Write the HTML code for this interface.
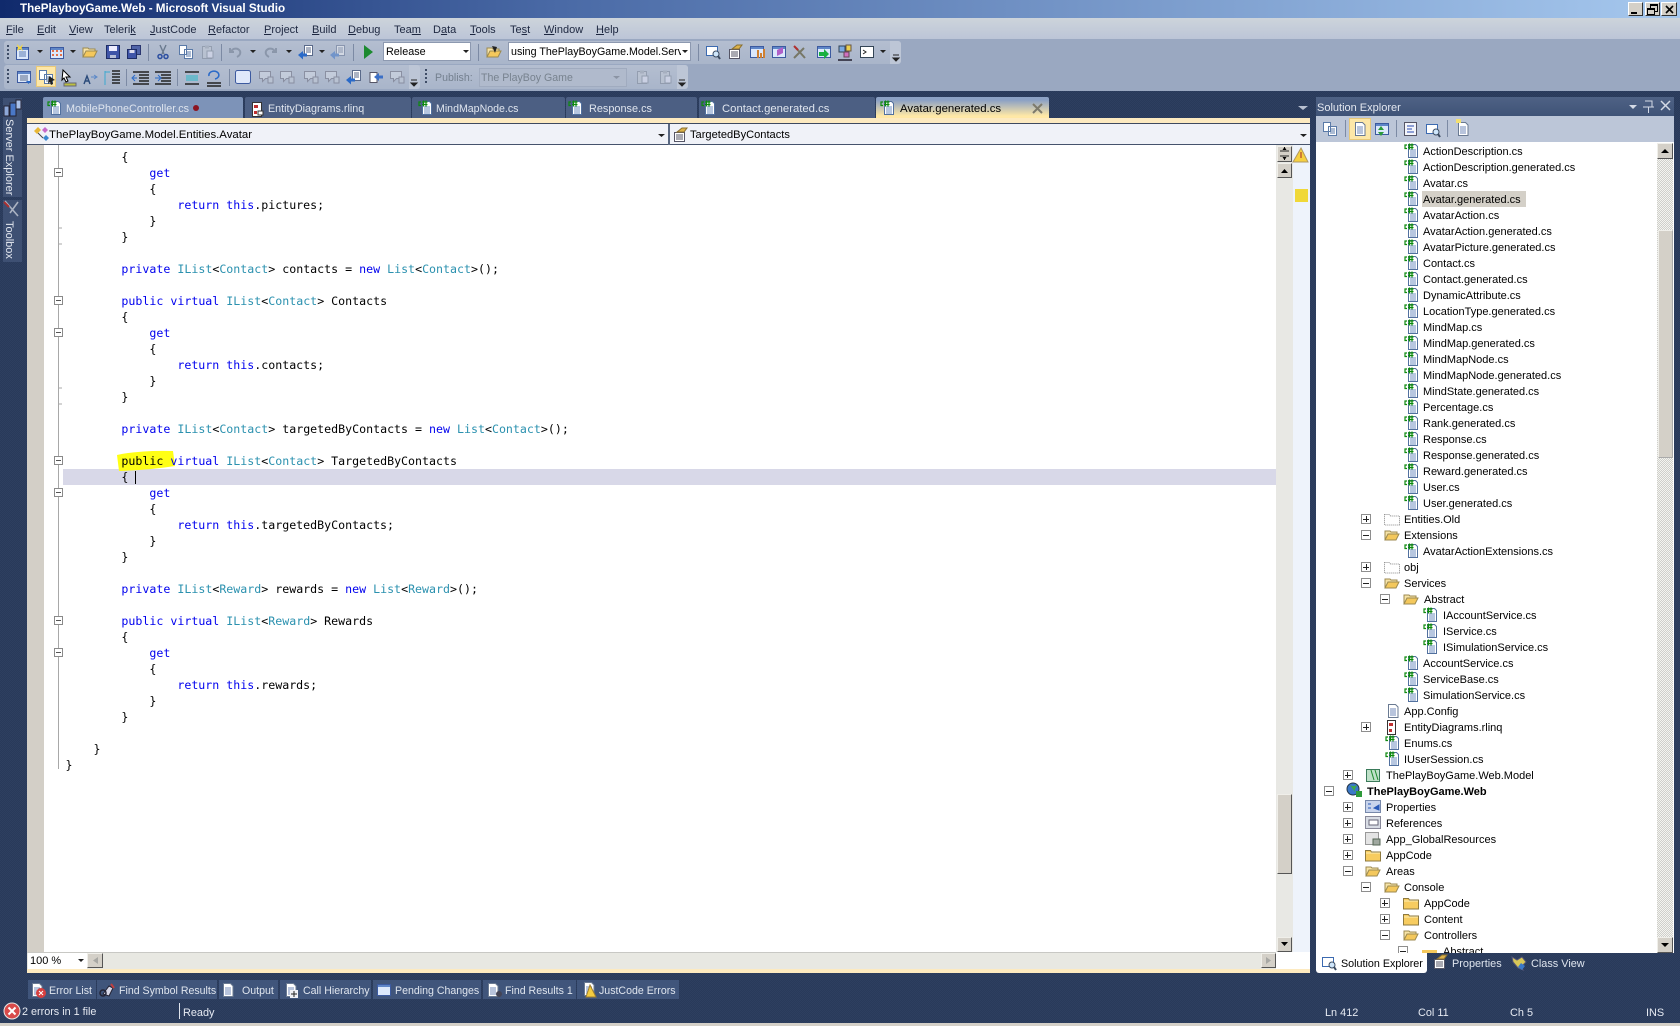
<!DOCTYPE html>
<html><head><meta charset="utf-8"><title>ThePlayboyGame.Web - Microsoft Visual Studio</title>
<style>
html,body{margin:0;padding:0;width:1680px;height:1026px;overflow:hidden;background:#2b3c5c repeating-conic-gradient(#293a5a 0 25%,#2e3f60 0 50%) 0 0/2px 2px}
body{position:relative;font:11px/16px "Liberation Sans",sans-serif;color:#000}
.a,.m span,.tab,.r b,.r span{position:absolute}
.a{white-space:nowrap}
.tab{top:97px;height:21px;background:#4c5f83;color:#dfe5ee;border-radius:2px 2px 0 0;line-height:25px;font-size:10.8px}
.tab span{position:absolute;white-space:nowrap}
.bt{position:absolute;top:980px;height:19px;background:#40557b;color:#dfe5ee;line-height:22px;white-space:nowrap;font-size:10.6px}
.bt span{position:absolute}
.m span{top:22px;color:#1d2740;font-size:11px;white-space:nowrap}
pre{position:absolute;left:65.5px;top:149px;margin:0;font:11.62px/16px "DejaVu Sans Mono",monospace;color:#000}
i{font-style:normal;color:#0000ee}em{font-style:normal;color:#2b91af}
.c{position:absolute;width:7px;height:7px;left:54px;border:1px solid #8a8a8a;background:#fff}
.c:after{content:"";position:absolute;left:1px;right:1px;top:3px;height:1px;background:#555}
.sb{position:absolute;background:#d4d0c8;border:1px solid;border-color:#f0efea #555 #555 #f0efea;box-sizing:border-box}
.tree{position:absolute;left:1316px;top:144px;width:341px;height:809px;overflow:hidden;font-size:11px}
.r{position:relative;height:16px;--l:0}
.r span{left:calc(51px + var(--l)*19px);white-space:nowrap;top:0}
.r.l4 span{left:107px}
.r b{left:calc(8px + var(--l)*18.6px);top:2px;width:8px;height:8px;border:1px solid #8e8e8e;background:#fff}
.r b:before{content:"";position:absolute;left:1px;right:1px;top:3.5px;height:1px;background:#222}
.r b.p:after{content:"";position:absolute;top:1px;bottom:1px;left:3.5px;width:1px;background:#222}
.l1{--l:1}.l2{--l:2}.l3,.l4{--l:3}
.w{position:absolute;top:2px;width:15px;height:14px;background:#d4d0c8;border:1px solid;border-color:#fff #333 #333 #fff;box-sizing:border-box}
.grip{position:absolute;width:2px;background-image:linear-gradient(#3e4c66 50%,transparent 50%);background-size:2px 4px}
.sep{position:absolute;width:1px;background:#7c8aa4}
svg.o{position:absolute;left:0;top:0;pointer-events:none}
</style></head><body>
<!-- title -->
<div class="a" style="left:0;top:0;width:1680px;height:18px;background:linear-gradient(90deg,#102a6c 0,#4a6aa6 560px,#a6c8ee 100%)"></div>
<div class="a" style="left:20px;top:0;line-height:18px;color:#fff;font-weight:bold;font-size:11.67px">ThePlayboyGame.Web - Microsoft Visual Studio</div>
<div class="w" style="left:1628px"><div class="a" style="left:2px;top:9px;width:6px;height:2px;background:#000"></div></div>
<div class="w" style="left:1645px"><div class="a" style="left:4px;top:1px;width:6px;height:5px;border:1px solid #000;border-top-width:2px"></div><div class="a" style="left:1px;top:5px;width:6px;height:4px;border:1px solid #000;border-top-width:2px;background:#d4d0c8"></div></div>
<div class="w" style="left:1661px;width:16px"><svg class="a" style="left:3px;top:2px" width="9" height="9"><path d="M1 1l7 7M8 1l-7 7" stroke="#000" stroke-width="1.6"/></svg></div>
<!-- menu + toolbars -->
<div class="a" style="left:0;top:18px;width:1680px;height:21px;background:linear-gradient(#cdd4db,#bcc5d7)"></div>
<div class="a" style="left:0;top:39px;width:1680px;height:52px;background:#9aa8c1"></div>
<div class="m" style="position:absolute;left:0;top:0">
<span style="left:6px"><u>F</u>ile</span><span style="left:37px"><u>E</u>dit</span><span style="left:69px"><u>V</u>iew</span><span style="left:104px">Teleri<u>k</u></span><span style="left:150px"><u>J</u>ustCode</span><span style="left:208px"><u>R</u>efactor</span><span style="left:264px"><u>P</u>roject</span><span style="left:312px"><u>B</u>uild</span><span style="left:348px"><u>D</u>ebug</span><span style="left:394px">Tea<u>m</u></span><span style="left:433px">D<u>a</u>ta</span><span style="left:470px"><u>T</u>ools</span><span style="left:510px">Te<u>s</u>t</span><span style="left:544px"><u>W</u>indow</span><span style="left:596px"><u>H</u>elp</span></div>
<div class="a" style="left:4px;top:41px;width:897px;height:23px;background:linear-gradient(#b4bed0,#a9b5ca);border-radius:3px"></div>
<div class="a" style="left:4px;top:65px;width:684px;height:24px;background:linear-gradient(#b4bed0,#a9b5ca);border-radius:3px"></div>
<div class="a" style="left:890px;top:41px;width:11px;height:23px;background:#bdc6d6;border-radius:0 3px 3px 0"></div>
<div class="a" style="left:677px;top:65px;width:11px;height:24px;background:#bdc6d6;border-radius:0 3px 3px 0"></div>
<div class="a" style="left:409px;top:65px;width:11px;height:24px;background:#bdc6d6;border-radius:0 3px 3px 0"></div>
<div class="grip" style="left:7px;top:45px;height:16px"></div><div class="grip" style="left:7px;top:69px;height:16px"></div><div class="grip" style="left:425px;top:69px;height:16px"></div>
<div class="sep" style="left:148px;top:44px;height:17px"></div><div class="sep" style="left:221px;top:44px;height:17px"></div><div class="sep" style="left:353px;top:44px;height:17px"></div><div class="sep" style="left:478px;top:44px;height:17px"></div><div class="sep" style="left:698px;top:44px;height:17px"></div>
<div class="sep" style="left:126px;top:69px;height:17px"></div><div class="sep" style="left:177px;top:69px;height:17px"></div><div class="sep" style="left:229px;top:69px;height:17px"></div>
<div class="a" style="left:383px;top:42px;width:88px;height:19px;background:#fff;border:1px solid #8d99b0;box-sizing:border-box;padding-left:2px;line-height:18px;font-size:10.8px">Release</div>
<div class="a" style="left:508px;top:42px;width:183px;height:19px;background:#fff;border:1px solid #8d99b0;box-sizing:border-box;padding-left:2px;line-height:19px;font-size:10.7px;overflow:hidden"><span style="display:block;width:170px;overflow:hidden">using ThePlayBoyGame.Model.Serv</span></div>
<div class="a" style="left:36px;top:66px;width:20px;height:21px;background:#fde7a8;border:1px solid #e8c878;box-sizing:border-box"></div>
<div class="a" style="left:435px;top:69px;color:#74808f;line-height:18px;font-size:10.6px">Publish:</div>
<div class="a" style="left:479px;top:68px;width:148px;height:19px;background:#b0bacc;border:1px solid #a0abbf;box-sizing:border-box;padding-left:1px;line-height:19px;color:#78838f;font-size:10.6px">The PlayBoy Game</div>
<!-- left sidebar -->
<div class="a" style="left:3px;top:98px;width:19px;height:99px;background:#3e5073"></div>
<div class="a" style="left:3px;top:200px;width:19px;height:62px;background:#3e5073"></div>
<div class="a" style="left:2px;top:119px;color:#e4e8f0;font-size:11px;line-height:14px;writing-mode:vertical-rl">Server Explorer</div>
<div class="a" style="left:2px;top:221px;color:#e4e8f0;font-size:11px;line-height:14px;writing-mode:vertical-rl">Toolbox</div>
<!-- tabs -->
<div class="tab" style="left:43px;width:200px;background:#7d93b8"><span style="left:23px">MobilePhoneController.cs</span><span style="left:150px;top:8px;width:6px;height:6px;background:#8c1420;border-radius:50%"></span></div>
<div class="tab" style="left:245px;width:166px"><span style="left:23px;font-size:10.75px">EntityDiagrams.rlinq</span></div>
<div class="tab" style="left:412px;width:153px"><span style="left:24px;font-size:10.6px">MindMapNode.cs</span></div>
<div class="tab" style="left:566px;width:131px"><span style="left:23px;font-size:10.9px">Response.cs</span></div>
<div class="tab" style="left:699px;width:176px"><span style="left:23px;font-size:11.3px">Contact.generated.cs</span></div>
<div class="tab" style="left:876px;width:173px;background:linear-gradient(#8ca1c4 15%,#ffe8a6 90%);color:#000"><span style="left:24px;font-size:11.4px">Avatar.generated.cs</span></div>
<div class="a" style="left:27px;top:118px;width:1283px;height:5px;background:#fdeac0"></div>
<div class="a" style="left:27px;top:123px;width:1283px;height:1px;background:#3e4a60"></div>
<!-- nav bar -->
<div class="a" style="left:27px;top:124px;width:1283px;height:21px;background:#f0f2f8;border-bottom:1px solid #46536c;box-sizing:border-box"></div>
<div class="a" style="left:668px;top:124px;width:2px;height:21px;background:#596780"></div>
<div class="a" style="left:49px;top:127px;font-size:11.4px">ThePlayBoyGame.Model.Entities.Avatar</div>
<div class="a" style="left:690px;top:127px;font-size:11.1px">TargetedByContacts</div>
<!-- editor -->
<div class="a" style="left:27px;top:145px;width:1249px;height:807px;background:#fff"></div>
<div class="a" style="left:27px;top:145px;width:17px;height:807px;background:#d3cfc7"></div>
<div class="a" style="left:58px;top:145px;width:1px;height:624px;background:#a8a8a8"></div>
<div class="a" style="left:63px;top:469px;width:1213px;height:16px;background:#d8d8e8"></div>
<svg class="a" style="left:0;top:0" width="200" height="500"><path d="M117 455Q140 450 173 451L175 466Q150 470 119 471Z" fill="#ffff14"/><path d="M58 228h4M58 244h4M58 388h4M58 404h4M58 548h4M58 564h4M58 708h4M58 724h4" stroke="#a8a8a8"/></svg>
<div class="c" style="top:168px"></div><div class="c" style="top:296px"></div><div class="c" style="top:328px"></div><div class="c" style="top:456px"></div><div class="c" style="top:488px"></div><div class="c" style="top:616px"></div><div class="c" style="top:648px"></div>
<pre>        {
            <i>get</i>
            {
                <i>return</i> <i>this</i>.pictures;
            }
        }

        <i>private</i> <em>IList</em>&lt;<em>Contact</em>&gt; contacts = <i>new</i> <em>List</em>&lt;<em>Contact</em>&gt;();

        <i>public</i> <i>virtual</i> <em>IList</em>&lt;<em>Contact</em>&gt; Contacts
        {
            <i>get</i>
            {
                <i>return</i> <i>this</i>.contacts;
            }
        }

        <i>private</i> <em>IList</em>&lt;<em>Contact</em>&gt; targetedByContacts = <i>new</i> <em>List</em>&lt;<em>Contact</em>&gt;();

        <span style="color:#000">public</span> <i>virtual</i> <em>IList</em>&lt;<em>Contact</em>&gt; TargetedByContacts
        {
            <i>get</i>
            {
                <i>return</i> <i>this</i>.targetedByContacts;
            }
        }

        <i>private</i> <em>IList</em>&lt;<em>Reward</em>&gt; rewards = <i>new</i> <em>List</em>&lt;<em>Reward</em>&gt;();

        <i>public</i> <i>virtual</i> <em>IList</em>&lt;<em>Reward</em>&gt; Rewards
        {
            <i>get</i>
            {
                <i>return</i> <i>this</i>.rewards;
            }
        }

    }
}</pre>
<div class="a" style="left:135px;top:471px;width:1px;height:13px;background:#000"></div>
<!-- editor scrollbars -->
<div class="a" style="left:1276px;top:145px;width:17px;height:807px;background:#e8e8e4"></div>
<div class="sb" style="left:1277px;top:146px;width:15px;height:16px"></div>
<div class="sb" style="left:1277px;top:163px;width:15px;height:15px"></div>
<div class="sb" style="left:1277px;top:794px;width:15px;height:80px"></div>
<div class="sb" style="left:1277px;top:937px;width:15px;height:15px"></div>
<div class="a" style="left:1293px;top:145px;width:17px;height:807px;background:#eef3fb"></div>
<div class="a" style="left:1295px;top:189px;width:13px;height:13px;background:#f0d838"></div>
<div class="a" style="left:27px;top:952px;width:1283px;height:17px;background:#e8e8e2;border-top:1px solid #c8c8c4;box-sizing:border-box"></div>
<div class="a" style="left:1276px;top:952px;width:34px;height:17px;background:#fff"></div>
<div class="a" style="left:27px;top:969px;width:1283px;height:4px;background:#fdeac0"></div>
<div class="a" style="left:28px;top:953px;width:59px;height:16px;background:#fff;line-height:17px;padding-left:2px;box-sizing:border-box;font-size:11px">100 %</div>
<div class="sb" style="left:87px;top:953px;width:16px;height:15px"></div>
<div class="sb" style="left:1261px;top:953px;width:15px;height:15px"></div>
<!-- solution explorer -->
<div class="a" style="left:1316px;top:97px;width:358px;height:19px;background:linear-gradient(#4f6285,#3f5377);color:#e4e8f0;line-height:22px;padding-left:1px;box-sizing:border-box;font-size:11px">Solution Explorer</div>
<div class="a" style="left:1316px;top:116px;width:358px;height:26px;background:#bcc6d8"></div>
<div class="a" style="left:1349px;top:118px;width:22px;height:22px;background:#fde7a8;border:1px solid #e8c878;box-sizing:border-box"></div>
<div class="sep" style="left:1345px;top:120px;height:17px"></div><div class="sep" style="left:1396px;top:120px;height:17px"></div><div class="sep" style="left:1447px;top:120px;height:17px"></div>
<div class="a" style="left:1316px;top:142px;width:358px;height:811px;background:#fff"></div>
<div class="a" style="left:1422px;top:191px;width:104px;height:16px;background:#d4d0c8"></div>
<div class="a" style="left:1657px;top:143px;width:16px;height:810px;background:repeating-conic-gradient(#cfcfcb 0 25%,#f4f4f0 0 50%) 0 0/2px 2px"></div>
<div class="sb" style="left:1657px;top:143px;width:16px;height:16px"></div>
<div class="sb" style="left:1658px;top:230px;width:15px;height:228px;border-color:#f0efea #aaa #aaa #f0efea"></div>
<div class="sb" style="left:1657px;top:937px;width:16px;height:16px"></div>
<div class="tree">
<div class="r l4"><span>ActionDescription.cs</span></div>
<div class="r l4"><span>ActionDescription.generated.cs</span></div>
<div class="r l4"><span>Avatar.cs</span></div>
<div class="r l4"><span>Avatar.generated.cs</span></div>
<div class="r l4"><span>AvatarAction.cs</span></div>
<div class="r l4"><span>AvatarAction.generated.cs</span></div>
<div class="r l4"><span>AvatarPicture.generated.cs</span></div>
<div class="r l4"><span>Contact.cs</span></div>
<div class="r l4"><span>Contact.generated.cs</span></div>
<div class="r l4"><span>DynamicAttribute.cs</span></div>
<div class="r l4"><span>LocationType.generated.cs</span></div>
<div class="r l4"><span>MindMap.cs</span></div>
<div class="r l4"><span>MindMap.generated.cs</span></div>
<div class="r l4"><span>MindMapNode.cs</span></div>
<div class="r l4"><span>MindMapNode.generated.cs</span></div>
<div class="r l4"><span>MindState.generated.cs</span></div>
<div class="r l4"><span>Percentage.cs</span></div>
<div class="r l4"><span>Rank.generated.cs</span></div>
<div class="r l4"><span>Response.cs</span></div>
<div class="r l4"><span>Response.generated.cs</span></div>
<div class="r l4"><span>Reward.generated.cs</span></div>
<div class="r l4"><span>User.cs</span></div>
<div class="r l4"><span>User.generated.cs</span></div>
<div class="r l2"><b class="p"></b><span style="left:88px">Entities.Old</span></div>
<div class="r l2"><b></b><span style="left:88px">Extensions</span></div>
<div class="r l4"><span>AvatarActionExtensions.cs</span></div>
<div class="r l2"><b class="p"></b><span style="left:88px">obj</span></div>
<div class="r l2"><b></b><span style="left:88px">Services</span></div>
<div class="r l3"><b></b><span>Abstract</span></div>
<div class="r"><span style="left:127px">IAccountService.cs</span></div>
<div class="r"><span style="left:127px">IService.cs</span></div>
<div class="r"><span style="left:127px">ISimulationService.cs</span></div>
<div class="r l4"><span>AccountService.cs</span></div>
<div class="r l4"><span>ServiceBase.cs</span></div>
<div class="r l4"><span>SimulationService.cs</span></div>
<div class="r"><span style="left:88px">App.Config</span></div>
<div class="r l2"><b class="p"></b><span style="left:88px">EntityDiagrams.rlinq</span></div>
<div class="r"><span style="left:88px">Enums.cs</span></div>
<div class="r"><span style="left:88px">IUserSession.cs</span></div>
<div class="r l1"><b class="p"></b><span style="left:70px">ThePlayBoyGame.Web.Model</span></div>
<div class="r"><b></b><span style="left:51px;font-weight:bold">ThePlayBoyGame.Web</span></div>
<div class="r l1"><b class="p"></b><span style="left:70px">Properties</span></div>
<div class="r l1"><b class="p"></b><span style="left:70px">References</span></div>
<div class="r l1"><b class="p"></b><span style="left:70px">App_GlobalResources</span></div>
<div class="r l1"><b class="p"></b><span style="left:70px">AppCode</span></div>
<div class="r l1"><b></b><span style="left:70px">Areas</span></div>
<div class="r l2"><b></b><span style="left:88px">Console</span></div>
<div class="r l3"><b class="p"></b><span>AppCode</span></div>
<div class="r l3"><b class="p"></b><span>Content</span></div>
<div class="r l3"><b></b><span>Controllers</span></div>
<div class="r" style="--l:4"><b></b><span style="left:127px">Abstract</span></div>
</div>
<div class="a" style="left:1316px;top:953px;width:111px;height:20px;background:#fff;border-radius:0 0 3px 3px"></div>
<div class="a" style="left:1341px;top:956px;font-size:10.75px">Solution Explorer</div>
<div class="a" style="left:1452px;top:956px;color:#dfe5ee;font-size:10.9px">Properties</div>
<div class="a" style="left:1531px;top:956px;color:#dfe5ee;font-size:10.9px">Class View</div>
<!-- bottom tabs -->
<div class="bt" style="left:28px;width:68px"><span style="left:21px">Error List</span></div>
<div class="bt" style="left:97px;width:120px"><span style="left:22px">Find Symbol Results</span></div>
<div class="bt" style="left:219px;width:59px"><span style="left:23px">Output</span></div>
<div class="bt" style="left:280px;width:91px"><span style="left:23px">Call Hierarchy</span></div>
<div class="bt" style="left:373px;width:108px"><span style="left:22px">Pending Changes</span></div>
<div class="bt" style="left:483px;width:93px"><span style="left:22px">Find Results 1</span></div>
<div class="bt" style="left:577px;width:102px"><span style="left:22px">JustCode Errors</span></div>
<!-- status -->
<div class="a" style="left:0;top:1023px;width:1680px;height:3px;background:#d4d0c8"></div>
<div class="a" style="left:22px;top:1004px;color:#e6eaf2;font-size:10.8px">2 errors in 1 file</div>
<div class="a" style="left:179px;top:1003px;width:1px;height:16px;background:#e0e4ec"></div>
<div class="a" style="left:183px;top:1005px;color:#e6eaf2;font-size:10.9px">Ready</div>
<div class="a" style="left:1325px;top:1005px;color:#e6eaf2;font-size:10.9px">Ln 412</div>
<div class="a" style="left:1418px;top:1005px;color:#e6eaf2;font-size:10.9px">Col 11</div>
<div class="a" style="left:1510px;top:1005px;color:#e6eaf2;font-size:10.9px">Ch 5</div>
<div class="a" style="left:1646px;top:1005px;color:#e6eaf2;font-size:10.9px">INS</div>
<!-- icon overlay -->
<svg class="o" width="1680" height="1026" viewBox="0 0 1680 1026" xmlns="http://www.w3.org/2000/svg">
<defs>
<g id="cs"><path d="M4.500 1.500h7l2 2v11h-9z" fill="#fff" stroke="#51709e"/><path d="M6 7h6M6 9h6M6 11h6M6 13h6" stroke="#6f8fc0"/><path d="M3 2H1v3.500h2" fill="none" stroke="#0e8a0e" stroke-width="1.200"/><path d="M5.500 .5v6M8 .5v6M4 2h5.500M4 4.500h5.500" stroke="#0e8a0e" stroke-width="1.200"/></g>
<g id="fo"><path d="M1 13V4h5l1 1h6v2" fill="#f7e4a8" stroke="#9c8a50"/><path d="M1 13l3-6h11l-3 6z" fill="#f4c85c" stroke="#9c8a50"/></g>
<g id="fc"><path d="M.5 3.500h5l1 1.500h9v9H.5z" fill="#f7cc60" stroke="#8e7a40"/><path d="M1 6h14" stroke="#fdeeb4"/></g>
<g id="fd"><path d="M.5 3.500h5l1 1.500h9v9H.5z" fill="#fff" stroke="#888" stroke-dasharray="1 1"/></g>
<g id="dc"><path d="M3.500 1.500h7l2.500 2.500v10.500H3.500z" fill="#fff" stroke="#6a7a92"/><path d="M5 6h6M5 8h6M5 10h6M5 12h6" stroke="#7088b8"/></g>
<g id="sv"><path d="M1.500 1.500h13v13h-13z" fill="#3f55a8" stroke="#1e2d66"/><path d="M4 2h8v5H4z" fill="#eef"/><path d="M5 11h6v3H5z" fill="#b8c0d8"/></g>
<g id="sq"><path d="M5.500 1.500h9v9h-9z" fill="#5064a8" stroke="#2a3670"/><path d="M1.500 5.500h9v9h-9z" fill="#3f55a8" stroke="#1e2d66"/><path d="M3.500 6h5v3h-5z" fill="#dde"/></g>
<g id="cu"><path d="M5 1l4 9M11 1l-4 9" stroke="#6a7a8e" stroke-width="1.400"/><circle cx="5" cy="12.500" r="2" fill="none" stroke="#2b4ea0" stroke-width="1.500"/><circle cx="11" cy="12.500" r="2" fill="none" stroke="#2b4ea0" stroke-width="1.500"/></g>
<g id="cp"><path d="M1.500 1.500h7v9h-7zM6.500 5.500h8v9h-8z" fill="#fff" stroke="#5a7aa8"/><path d="M8 8h5M8 10h5M8 12h5" stroke="#5a7aa8"/></g>
<g id="gr" opacity=".45"><path d="M3.500 2.500h9v12h-9z" fill="#c6ccd6" stroke="#737d8c"/><path d="M6 1.500h4v3H6z" fill="#9aa2ae"/><path d="M8 7h6v7H8z" fill="#eef" stroke="#737d8c"/></g>
<g id="un" opacity=".55" fill="none" stroke="#6e7a8e" stroke-width="2"><path d="M3 8a5 5 0 0 1 9-1c1 3-1 5-3 6M2 4v4h4"/></g>
<g id="nv"><path d="M6.500 1.500h8v10h-8z" fill="#fff" stroke="#5a6a8a"/><path d="M8 4h5M8 6h5M8 8h5" stroke="#5a6a8a"/><path d="M0 11l5-4v2.500h4v3H5v3z" fill="#2a6ac8"/></g>
<g id="bx"><path d="M1.500 2.500h13v11h-13z" fill="#dce8fb" stroke="#3c5aa0"/><path d="M2 3h12v2H2z" fill="#5f86c8"/></g>
<g id="mg"><path d="M1.500 2.500h11v9h-11z" fill="#fff" stroke="#3c6ab0"/><circle cx="11" cy="10" r="3" fill="#cfe6fb" stroke="#3a4a60"/><path d="M13 12l2 3" stroke="#3a4a60" stroke-width="2"/></g>
<g id="pr"><path d="M2.500 5.500h10v9h-10z" fill="#fff" stroke="#556"/><path d="M4 8h7M4 10h7M4 12h7" stroke="#556"/><path d="M5 5l5-4h5l-3 4z" fill="#dcb24a" stroke="#8a7030"/></g>
<g id="ba" opacity=".5"><path d="M1.500 2.500h11v7h-5l-3 3v-3h-3z" fill="#d7dde8" stroke="#667"/><path d="M10 8h5v6h-5z" fill="#c5cdd9" stroke="#667"/></g>
<g id="ar"><path d="M2 3.500h7v10H2z" fill="#fff" stroke="#556"/><path d="M6 8l5-4v2.500h4v3h-4V12z" fill="#3b6fc6"/></g>
</defs>
<!-- toolbar 1 -->
<g>
<path d="M16.500 47.500h12v12h-12z" fill="#dce8fb" stroke="#3c5aa0"/><path d="M17 48h11v2H17z" fill="#5f86c8"/><path d="M19 52h7M19 54h7M19 56h7" stroke="#5a7ab0"/><path d="M17 44l3 3 3-3-1.500 4 1.500 3-3-2-3 2 1-3z" fill="#f5d840"/>
<use href="#bx" x="49" y="45"/><path d="M52 50h2v2h-2zM56 50h2v2h-2zM60 50h2v2h-2zM52 54h2v2h-2zM56 54h2v2h-2zM60 54h2v2h-2z" fill="#e0704a"/>
<use href="#fo" x="82" y="44"/><use href="#sv" x="105" y="44"/><use href="#sq" x="126" y="44"/>
<use href="#cu" x="155" y="44"/><use href="#cp" x="178" y="44"/><use href="#gr" x="199" y="44"/>
<use href="#un" x="228" y="44"/><g transform="translate(278 44) scale(-1 1)"><use href="#un"/></g>
<use href="#nv" x="298" y="44"/><g opacity=".45"><use href="#nv" x="330" y="44"/></g>
<path d="M364 45l9 7-9 7z" fill="#1c8a30"/>
<use href="#fo" x="486" y="44"/><path d="M492 46l5 1-2 6z" fill="#222"/>
<path d="M37 50h6l-3 3zM70 50h6l-3 3zM250 50h6l-3 3zM286 50h6l-3 3zM319 50h6l-3 3zM463 50h6l-3 3zM682 50h6l-3 3zM880 50h6l-3 3z" fill="#222"/>
<use href="#mg" x="705" y="44"/><use href="#pr" x="727" y="44"/><use href="#bx" x="749" y="44"/><path d="M757 50h2v8h-2zM760 53h2v5h-2zM763 49h2v9h-2z" fill="#d08030"/><use href="#bx" x="771" y="44"/><path d="M777 50l6-3v6l-6 3z" fill="#b060c8"/>
<path d="M794 58l10-10M805 58l-9-10" stroke="#776" stroke-width="2"/><path d="M794 46l4 4" stroke="#b03030" stroke-width="2"/>
<use href="#bx" x="816" y="44"/><path d="M819 52h5v-3l5 5-5 5v-3h-5z" fill="#18b040"/>
<path d="M839 46h6v6h-6z" fill="#7aa8e0" stroke="#345"/><path d="M846 45h5v6h-5z" fill="#ecd050" stroke="#654"/><path d="M844 52h5v5h-5z" fill="#d070c0" stroke="#645"/><path d="M838 60h14" stroke="#445" stroke-width="2"/>
<path d="M860.500 46.500h13v11h-13z" fill="#fff" stroke="#345"/><path d="M863 50l3 2-3 2" fill="none" stroke="#222"/>
<path d="M893 55h6M893 58h6l-3 3z" stroke="#222" fill="#222"/>
</g>
<!-- toolbar 2 -->
<g>
<use href="#bx" x="16" y="69"/><path d="M20 76h8M20 78h8M20 80h8" stroke="#5a6a8a"/><path d="M26 81h5l-2.500 3z" fill="#2a6ac8"/><use href="#cp" x="38" y="69"/><path d="M49 76l6 4-3 1 1 3-2 1-1-3-2 2z" fill="#222"/>
<path d="M63 70l7 7h-4l2 4-2 1-2-4-2 2z" fill="#fff" stroke="#000"/><path d="M64 83h12v3H64z" fill="#bcc040" stroke="#667"/>
<path d="M84 84l3-8 3 8M85 81h4" fill="none" stroke="#2a4a7a" stroke-width="1.400"/><path d="M91 77h5M94 75l3 2-3 2" fill="none" stroke="#5a88c8"/>
<path d="M105 71v14M105 72h5" stroke="#3aa8d0"/><path d="M112 71h8M112 74h8M112 77h8M112 80h8M112 83h8" stroke="#222" stroke-width="1.400"/>
<path d="M133 72h16M139 75h10M139 78h10M139 81h10M133 84h16" stroke="#222" stroke-width="1.400"/><path d="M137 78h-4M135 75l-3 3 3 3" fill="none" stroke="#2a6ac8"/>
<path d="M155 72h16M161 75h10M161 78h10M161 81h10M155 84h16" stroke="#222" stroke-width="1.400"/><path d="M155 78h5M158 75l3 3-3 3" fill="none" stroke="#2a6ac8"/>
<path d="M185 72h14M185 84h14" stroke="#222" stroke-width="1.500"/><path d="M186 76h12M186 78h12M186 80h12" stroke="#28b8c8"/>
<path d="M207 83h14M207 86h14" stroke="#222" stroke-width="1.500"/><path d="M209 76a5 4 0 1 1 6 3" fill="none" stroke="#2a6ac8" stroke-width="1.500"/>
<rect x="235.500" y="70.500" width="15" height="13" rx="2" fill="#dfe8fa" stroke="#3c5aa0"/>
<use href="#ba" x="258" y="69"/><use href="#ba" x="279" y="69"/><use href="#ba" x="303" y="69"/><use href="#ba" x="324" y="69"/>
<use href="#nv" x="346" y="69"/><use href="#ar" x="368" y="69"/><use href="#ba" x="389" y="69"/>
<path d="M411 80h6M411 83h6l-3 3z" stroke="#222" fill="#222"/>
<use href="#gr" x="634" y="69"/><use href="#gr" x="657" y="69"/><path d="M679 80h6M679 83h6l-3 3z" stroke="#222" fill="#222"/>
</g>
<path d="M613 76h7l-3.500 3z" fill="#8b94a4"/>
<!-- sidebar icons -->
<path d="M4 106h5v10H4z" fill="#8ea8d8" stroke="#223"/><path d="M10 103h6v13h-6z" fill="#4a78c8" stroke="#223"/><path d="M16 100h5v9h-5z" fill="#aac0e8" stroke="#223"/>
<path d="M5 201l13 15M18 202l-8 11" stroke="#aab2c2" stroke-width="1.600"/><path d="M4 202l5 5" stroke="#a83030" stroke-width="2"/>
<!-- tab icons -->
<use href="#cs" x="47" y="100"/><use href="#cs" x="418" y="100"/><use href="#cs" x="568" y="100"/><use href="#cs" x="701" y="100"/><use href="#cs" x="880" y="100"/>
<path d="M252.500 102.500h9v14h-9z" fill="#fff" stroke="#333"/><path d="M254 105h4v3h-4zM254 111h3v3h-3z" fill="#c03030"/><path d="M258 111h5v4h-5z" fill="#fff" stroke="#333"/>
<path d="M1033 104l9 9M1042 104l-9 9" stroke="#7d7a6c" stroke-width="2"/>
<path d="M1298 106h10l-5 4z" fill="#b8c0d0"/>
<!-- nav icons -->
<path d="M34 131l4-4 3 3-4 4z" fill="#e8b838"/><path d="M42 130l3-3 3 3-3 3z" fill="#c868c8"/><path d="M43 138l3-3 3 3-3 3z" fill="#3a88d0"/><path d="M38 133l5 5" stroke="#444"/>
<use href="#pr" x="672" y="127"/>
<path d="M658 134h7l-3.500 3zM1300 134h7l-3.500 3z" fill="#222"/>
<!-- scroll glyphs -->
<path d="M1280 151h9M1280 156h9M1284.500 147v3M1284.500 157v3" stroke="#222"/><path d="M1282.500 150l2-3 2 3zM1282.500 157l2 3 2-3z"/>
<path d="M1281 173l3.500-4 3.500 4zM1661 153l4-4 4 4zM1661 943l4 4 4-4zM1281 942l3.500 4 3.500-4z"/>
<path d="M1301 148l7 14h-15z" fill="#f6d040" stroke="#b09860"/><path d="M1301 152v6" stroke="#c06030" stroke-width="1.500"/>
<path d="M98 957v7l-5-3.500zM1266 957v7l5-3.500z" fill="#a8a8a4"/><path d="M78 959h6l-3 3z" fill="#222"/>
<path d="M1645 101h7v6h-7M1648.500 107v6M1643 107h11" stroke="#d4dae6" fill="none"/><path d="M1661 101l9 9M1670 101l-9 9" stroke="#d4dae6" stroke-width="1.500"/>
<path d="M1629 105h8l-4 4z" fill="#d4dae6"/>
<!-- explorer toolbar -->
<use href="#cp" x="1322" y="121"/><use href="#dc" x="1352" y="121"/><use href="#bx" x="1374" y="121"/><path d="M1378 130l3-4 3 4zM1384 132l-3 4-3-4z" fill="#2a9a3a"/>
<path d="M1404.500 122.500h12v13h-12z" fill="#f4f6fb" stroke="#556"/><path d="M1407 126h7M1407 129h5M1407 132h7" stroke="#2a4ab0"/>
<use href="#mg" x="1425" y="122"/><use href="#dc" x="1455" y="121"/><path d="M1456 119h5v4h-5z" fill="#f4e070"/>
<!-- tree icons -->
<use href="#cs" x="1404" y="143"/><use href="#cs" x="1404" y="159"/><use href="#cs" x="1404" y="175"/><use href="#cs" x="1404" y="191"/><use href="#cs" x="1404" y="207"/><use href="#cs" x="1404" y="223"/><use href="#cs" x="1404" y="239"/><use href="#cs" x="1404" y="255"/><use href="#cs" x="1404" y="271"/><use href="#cs" x="1404" y="287"/><use href="#cs" x="1404" y="303"/><use href="#cs" x="1404" y="319"/><use href="#cs" x="1404" y="335"/><use href="#cs" x="1404" y="351"/><use href="#cs" x="1404" y="367"/><use href="#cs" x="1404" y="383"/><use href="#cs" x="1404" y="399"/><use href="#cs" x="1404" y="415"/><use href="#cs" x="1404" y="431"/><use href="#cs" x="1404" y="447"/><use href="#cs" x="1404" y="463"/><use href="#cs" x="1404" y="479"/><use href="#cs" x="1404" y="495"/>
<use href="#fd" x="1384" y="511"/><use href="#fo" x="1384" y="527"/><use href="#cs" x="1404" y="543"/><use href="#fd" x="1384" y="559"/><use href="#fo" x="1384" y="575"/><use href="#fo" x="1403" y="591"/>
<use href="#cs" x="1423" y="607"/><use href="#cs" x="1423" y="623"/><use href="#cs" x="1423" y="639"/><use href="#cs" x="1404" y="655"/><use href="#cs" x="1404" y="671"/><use href="#cs" x="1404" y="687"/>
<use href="#dc" x="1385" y="703"/><path d="M1387.500 720.500h8v14h-8z" fill="#fff" stroke="#333"/><path d="M1389 723h4v3h-4zM1389 729h3v3h-3z" fill="#c03030"/><use href="#cs" x="1385" y="735"/><use href="#cs" x="1385" y="751"/>
<path d="M1366.500 769.500h13v12h-13z" fill="#bfe0c8" stroke="#3a7a5a"/><path d="M1371 770l3 10M1375 770l3 10" stroke="#1d8a2d"/>
<circle cx="1353" cy="789" r="6" fill="#3a78c8" stroke="#234"/><path d="M1350 785c3 2 5 1 7 0-1 3-3 4-2 7" fill="#3da84a"/><path d="M1356 791h6v6h-6z" fill="#2d9a3a"/>
<path d="M1365.500 800.500h15v12h-15z" fill="#c8d4ec" stroke="#7788aa"/><path d="M1368 804h3M1368 808h3M1374 808l5-3v5z" fill="#2a5ab8" stroke="#2a5ab8"/>
<path d="M1365.500 816.500h15v12h-15z" fill="#d8dce4" stroke="#889"/><path d="M1369 820h9v5h-9z" fill="#fff" stroke="#667"/>
<path d="M1365.500 832.500h13v12h-13z" fill="#e4e4e4" stroke="#999"/><path d="M1373 839h7v6h-7z" fill="#a0a8a0" stroke="#565"/>
<use href="#fc" x="1365" y="847"/><use href="#fo" x="1365" y="863"/><use href="#fo" x="1384" y="879"/><use href="#fc" x="1403" y="895"/><use href="#fc" x="1403" y="911"/><use href="#fo" x="1403" y="927"/>
<path d="M1422 950h15v3h-15z" fill="#f4c85c"/>
<!-- bottom tree tab icons -->
<use href="#mg" x="1321" y="955"/><use href="#pr" x="1432" y="954"/><path d="M1512 957l5 3 5-3 4 5-5 5 2 3-5-2-5-6z" fill="#d8c858" stroke="#557"/><path d="M1521 963l4 3-3 4-4-3z" fill="#3a78c8"/>
<!-- bottom tabs icons -->
<use href="#dc" x="29" y="982"/><circle cx="41" cy="993" r="5" fill="#d84040"/><path d="M39 991l4 4M43 991l-4 4" stroke="#fff"/>
<path d="M103 994l6-8 4 2-4 8z" fill="#d8d8e8" stroke="#223"/><circle cx="103" cy="993" r="3" fill="none" stroke="#223" stroke-width="1.500"/><path d="M111 984l3 4" stroke="#c04040" stroke-width="2"/>
<use href="#dc" x="220" y="982"/>
<use href="#dc" x="283" y="982"/><path d="M290 990h8v8h-8z" fill="#f0f0f4"/><path d="M291 994h6M294 991v6" stroke="#222"/>
<use href="#bx" x="376" y="982"/><use href="#dc" x="485" y="982"/><circle cx="499" cy="994" r="3" fill="#445"/>
<use href="#dc" x="581" y="981"/><path d="M590 985l6 12h-10z" fill="#f4cc40" stroke="#a08030"/>
<circle cx="12" cy="1011" r="8" fill="#d84a4a" stroke="#e8e8e8"/><path d="M8.500 1007.500l7 7M15.500 1007.500l-7 7" stroke="#fff" stroke-width="2"/>
</svg>
</body></html>
